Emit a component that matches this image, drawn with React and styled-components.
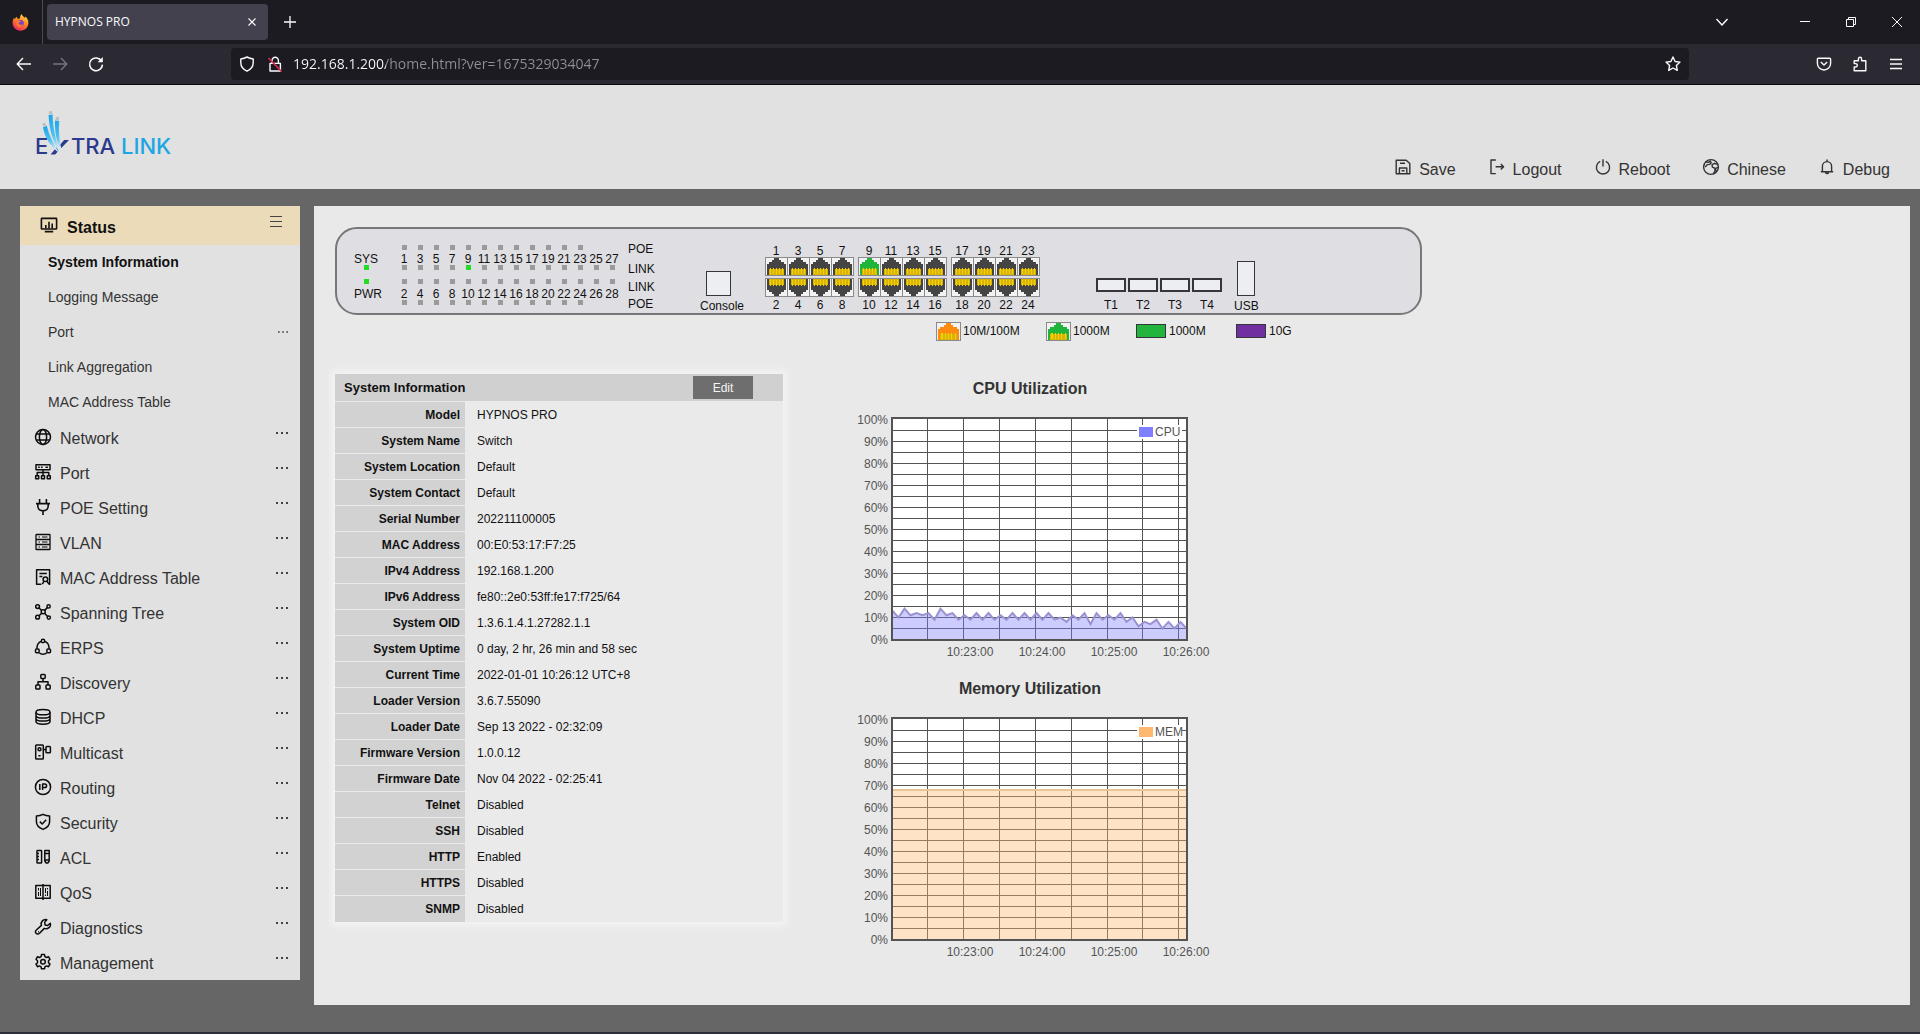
import React from "react";
import styled, { createGlobalStyle } from "styled-components";

const UI = `"Liberation Sans", Arial, sans-serif`;
const CHROME = `"Open Sans", "Noto Sans", sans-serif`;

const GlobalStyle = createGlobalStyle`
  *, *::before, *::after { box-sizing: border-box; }
  body { margin: 0; background: #666; font-family: ${UI}; color: #333; }
  button, input { font: inherit; color: inherit; margin: 0; padding: 0; border: 0; background: none; }
  button { cursor: pointer; }
  a { color: inherit; text-decoration: none; }
  svg { display: block; flex: none; overflow: visible; }
`;

const Window = styled.div`
  display: flex;
  flex-direction: column;
  min-height: 100vh;
  border-bottom: 2px solid #2b2d38;
`;

/* ---------- browser chrome ---------- */

const TabBar = styled.div`
  display: flex;
  align-items: center;
  height: 44px;
  background: #1c1b22;
  color: #fbfbfe;
`;

const BrandSlot = styled.div`
  display: flex;
  align-items: center;
  align-self: stretch;
  width: 43px;
  padding-left: 12px;
  border-right: 1px solid #4a4956;
`;

const Tab = styled.div`
  display: flex;
  align-items: center;
  justify-content: space-between;
  width: 221px;
  height: 36px;
  margin-left: 4px;
  padding: 0 12px 0 8px;
  border-radius: 4px;
  background: #42414d;
  font: 12px/16px ${CHROME};
`;

const IconButton = styled.button`
  display: flex;
  align-items: center;
  justify-content: center;
  width: ${(p) => p.$w || 36}px;
  height: 32px;
  color: ${(p) => (p.$dim ? "#76757f" : "#fbfbfe")};
`;

const TabClose = styled(IconButton)`
  width: 8px;
  height: 16px;
`;

const NewTab = styled(IconButton)`
  margin-left: 4px;
`;

const WindowControls = styled.div`
  display: flex;
  align-items: center;
  margin-left: auto;
`;

const Toolbar = styled.div`
  display: flex;
  align-items: center;
  height: 41px;
  background: #2b2a33;
  border-bottom: 1px solid #0c0c0d;
`;

const ToolGroup = styled.div`
  display: flex;
  align-items: center;
  justify-content: ${(p) => (p.$end ? "flex-end" : "flex-start")};
  width: 231px;
  padding: 0 6px;
`;

const UrlBar = styled.form`
  display: flex;
  flex: 1;
  align-items: center;
  gap: 12px;
  height: 32px;
  padding: 0 8px;
  border-radius: 4px;
  background: #1c1b22;
  color: #fbfbfe;
`;

const UrlInput = styled.input`
  flex: 1;
  height: 20px;
  margin-left: -2px;
  outline: none;
  font: 14px/20px ${CHROME};
  color: #fbfbfe;
  background: linear-gradient(to right, #fbfbfe 93px, #8f8f9b 93px);
  background-clip: text;
  -webkit-background-clip: text;
  -webkit-text-fill-color: transparent;
`;

/* ---------- page header ---------- */

const Header = styled.header`
  display: flex;
  justify-content: space-between;
  align-items: flex-end;
  height: 104px;
  padding: 0 30px 8px 35px;
  background: #e1e1e1;
`;

const Logo = styled.a`
  display: block;
  align-self: flex-start;
  padding-top: 22px;
`;

const TopNav = styled.nav`
  display: flex;
  gap: 33px;
`;

const TopLink = styled.a`
  display: flex;
  gap: 8px;
  font-size: 16px;
  line-height: 22px;
`;

/* ---------- layout ---------- */

const Body = styled.div`
  display: flex;
  flex: 1;
  align-items: stretch;
  gap: 14px;
  padding: 17px 10px 27px 20px;
  background: #666;
`;

const Sidebar = styled.nav`
  align-self: flex-start;
  width: 280px;
  background: #e1e1e1;
`;

const SectionHead = styled.div`
  display: flex;
  gap: 9px;
  height: 39px;
  padding: 10px 18px 0 20px;
  background: #ebdbb8;
  color: #111;
`;

const SectionTitle = styled.h2`
  margin: 0;
  font-size: 16px;
  line-height: 24px;
`;

const MenuButton = styled.button`
  display: flex;
  align-items: flex-start;
  width: 12px;
  height: 12px;
  margin-left: auto;
  color: #444;
`;

const SubItem = styled.a`
  display: flex;
  align-items: center;
  justify-content: space-between;
  height: 35px;
  padding: 0 12px 2px 28px;
  font-size: 14px;
  font-weight: ${(p) => (p.$current ? "bold" : "normal")};
  color: ${(p) => (p.$current ? "#111" : "#333")};
`;

const MenuItem = styled.a`
  display: flex;
  gap: 8px;
  height: 35px;
  padding: 8px 12px 0 14px;
  font-size: 16px;
  line-height: 22px;
`;

const ItemIcon = styled.span`
  display: flex;
  width: 18px;
  height: 18px;
  color: #0c0c0c;
`;

const DotsSlot = styled.span`
  margin-left: auto;
  padding-top: 4px;
`;

const Main = styled.main`
  flex: 1;
  padding: 21px;
  background: #e9e9e9;
`;

/* ---------- device front panel ---------- */

const Panel = styled.section`
  display: grid;
  grid-template-columns: 42px 232px 72px 65px 331px 138px auto;
  align-items: start;
  max-width: 1087px;
  height: 88px;
  padding: 14px 17px 0;
  border: 2px solid #77777a;
  border-radius: 22px;
  background: #dfdfe3;
  color: #111;
  font-size: 12px;
  line-height: 12px;
`;

const Lamps = styled.div`
  display: flex;
  flex-direction: column;
  padding-top: 10px;
`;

const Led = styled.i`
  display: block;
  width: 5px;
  height: 5px;
  margin: ${(p) => p.$m || "0"};
  background: ${(p) => (p.$on ? "#22dd22" : "#9a9a9a")};
  visibility: ${(p) => (p.$hidden ? "hidden" : "visible")};
`;

const LedBank = styled.div`
  display: flex;
  padding-top: 2px;
`;

const LedColumn = styled.div`
  display: flex;
  flex-direction: column;
  align-items: center;
  width: 16px;
`;

const RowNames = styled.div`
  display: grid;
  grid-template-rows: 20px 18px 17px 12px;
`;

const ConsolePort = styled.div`
  display: flex;
  flex-direction: column;
  padding-top: 28px;
`;

const Socket = styled.div`
  width: ${(p) => p.$w}px;
  height: ${(p) => p.$h}px;
  margin: ${(p) => p.$m || "0"};
  border: ${(p) => p.$b || 1}px solid #35353c;
  background: ${(p) => p.$fill || "#eceef2"};
`;

const JackBank = styled.div`
  display: flex;
  gap: 5px;
  padding-top: 2px;
`;

const JackGroup = styled.div`
  display: flex;
`;

const JackColumn = styled.div`
  display: grid;
  grid-template-rows: 12px 21px 21px 12px;
  justify-items: center;
  width: 22px;
`;

const Slots = styled.div`
  display: flex;
  gap: 2px;
  padding-top: 35px;
`;

const SlotColumn = styled.div`
  display: flex;
  flex-direction: column;
  align-items: center;
  gap: 7px;
`;

const UsbPort = styled.div`
  display: flex;
  flex-direction: column;
  align-items: center;
  justify-self: start;
  padding-top: 18px;
`;

const Legend = styled.ul`
  display: grid;
  grid-template-columns: 110px 90px 100px auto;
  max-width: 1087px;
  margin: 6px 0 0;
  padding: 0 0 0 601px;
  list-style: none;
  color: #111;
  font-size: 12px;
`;

const LegendItem = styled.li`
  display: flex;
  align-items: center;
  gap: 3px;
  height: 20px;
`;

/* ---------- information table & charts ---------- */

const Columns = styled.div`
  display: flex;
  align-items: flex-start;
  gap: 57px;
  margin-top: 33px;
`;

const InfoCard = styled.section`
  width: 448px;
  box-shadow: 0 0 6px 4px #f3f3f3;
  color: #111;
`;

const CardHead = styled.div`
  display: flex;
  align-items: center;
  justify-content: space-between;
  height: 27px;
  padding: 0 30px 0 9px;
  background: #d0d0d0;
`;

const CardTitle = styled.h2`
  margin: 0;
  font-size: 13px;
`;

const EditButton = styled.button`
  width: 60px;
  height: 23px;
  background: #6e6e6e;
  color: #f4f4f4;
  font-size: 12px;
`;

const InfoTable = styled.table`
  width: 100%;
  border-collapse: collapse;
  background: #eaeaeb;
  font-size: 12px;

  th, td {
    height: 26px;
    padding: 0;
    border-top: 1px solid transparent;
  }
  th {
    width: 130px;
    padding-right: 5px;
    border-top-color: #eaeaea;
    background: #d2d2d2;
    text-align: right;
  }
  td {
    padding-left: 12px;
  }
`;

const Charts = styled.div`
  display: flex;
  flex-direction: column;
  gap: 20px;
  padding-top: 6px;
`;

const Figure = styled.figure`
  display: flex;
  flex-direction: column;
  gap: 12px;
  margin: 0;
`;

const Caption = styled.figcaption`
  font-size: 16px;
  font-weight: bold;
  line-height: 18px;
  text-align: center;
`;

const AxisText = styled.text`
  font: 12px ${UI};
  fill: #545454;
`;

/* ---------- icons ---------- */

const S = ({ size = 18, box, w = 1.5, children }) => (
  <svg
    width={size}
    height={size}
    viewBox={`0 0 ${box || size} ${box || size}`}
    fill="none"
    stroke="currentColor"
    strokeWidth={w}
    strokeLinejoin="round"
    aria-hidden="true"
  >
    {children}
  </svg>
);

const icons = {
  network: (
    <S w={1.5}>
      <circle cx="9" cy="9" r="7.5" />
      <ellipse cx="9" cy="9" rx="3.6" ry="7.5" />
      <path d="M2.4 6h13.2M2.4 12h13.2" />
    </S>
  ),
  port: (
    <S w={1.5}>
      <rect x="2" y="1.8" width="14" height="5" />
      <path d="M4.200 4.3h1.6M7 4.3h1.6M11.5 4.3h2.4M9 6.8V13M3.2 12.6V9.6h11.6v3.2" />
      <rect x="1.7" y="12.8" width="3" height="3" />
      <rect x="7.5" y="12.8" width="3" height="3" />
      <rect x="13.3" y="12.8" width="3" height="3" />
    </S>
  ),
  poe: (
    <S w={1.6}>
      <path d="M5.6 1v4.5M12.4 1v4.5M2 5.6h14M3.8 5.6V8c0 3 2.4 4.8 5.2 4.8S14.2 11 14.2 8V5.6M9 12.8V17" />
    </S>
  ),
  vlan: (
    <S w={1.3}>
      <rect x="2" y="1.5" width="14" height="15" rx="0.6" />
      <path d="M2 6.5h14M2 11.5h14" />
      <path d="M4.500 4h1.500M8 4h5.500M4.500 9h1.500M8 9h5.500M4.500 14h1.500M8 14h5.500" strokeWidth="1" />
    </S>
  ),
  mac: (
    <S w={1.5}>
      <path d="M7.4 16.2H2.6V1.8h13v14.4h-.6M5.4 5.4h7.4M5.4 8.4h3" />
      <circle cx="11.4" cy="11.2" r="2.3" />
      <path d="M12.8 13.2l2.4 3M9.8 13.4l-1.4 2.8" />
    </S>
  ),
  spanning: (
    <S w={1.5}>
      <circle cx="3.6" cy="3.6" r="1.9" />
      <circle cx="14.6" cy="3.4" r="1.6" />
      <circle cx="3.6" cy="14.2" r="1.9" />
      <circle cx="14.8" cy="14.6" r="1.6" />
      <circle cx="9.2" cy="8.8" r="2" />
      <path d="M5 5l2.600 2.400M13.400 4.600l-2.800 2.800M5 12.800l2.600-2.400M13.600 13.400l-2.800-3" />
    </S>
  ),
  erps: (
    <S w={1.5}>
      <circle cx="9" cy="3" r="1.7" />
      <path d="M7.2 3.4C4.6 4.4 3 6.8 3 9.8v1M10.800 3.400c2.600 1 4.200 3.400 4.200 6.400v1M5.200 14.800c2 2 5.600 2 7.600 0" />
      <rect x="1.5" y="11" width="3.6" height="3.8" rx="1" />
      <rect x="12.9" y="11" width="3.6" height="3.8" rx="1" />
    </S>
  ),
  discovery: (
    <S w={1.5}>
      <rect x="6.800" y="1.400" width="4.400" height="4" rx="0.8" />
      <path d="M9 5.400v3.400M4 12V8.800h10V12" />
      <rect x="1.800" y="12" width="4.200" height="4" rx="0.8" />
      <rect x="12" y="12" width="4.200" height="4" rx="0.8" />
    </S>
  ),
  dhcp: (
    <S w={1.5}>
      <ellipse cx="9" cy="4.200" rx="7" ry="2.600" />
      <path d="M2 4.200v9.400c0 1.500 3.100 2.600 7 2.600s7-1.100 7-2.600V4.200M2 7.400C2 8.900 5.100 10 9 10s7-1.100 7-2.600M2 10.500c0 1.500 3.100 2.600 7 2.600s7-1.100 7-2.600" />
    </S>
  ),
  multicast: (
    <S w={1.5}>
      <rect x="1.700" y="2" width="7.600" height="14" rx="0.8" />
      <circle cx="5.500" cy="6.200" r="1.500" />
      <path d="M4.400 12.800h2.200M9.300 6.400H12" />
      <rect x="12" y="3.400" width="4.400" height="6.400" rx="0.8" />
    </S>
  ),
  routing: (
    <S w={1.5}>
      <circle cx="9" cy="9" r="7.600" />
      <path d="M5.800 6v6M8.600 12V6h2.200a1.800 1.800 0 0 1 0 3.600H8.600" />
    </S>
  ),
  security: (
    <S w={1.5}>
      <path d="M9 1.400c2 1.200 4.200 1.600 6.600 1.600v5.600c0 3.800-2.800 6.400-6.600 7.800-3.800-1.400-6.600-4-6.600-7.800V3C4.800 3 7 2.600 9 1.400z" />
      <path d="M5.800 8.600l2.400 2.400 4-4.200" />
    </S>
  ),
  acl: (
    <S w={1.5}>
      <rect x="3" y="2.400" width="4.600" height="12.600" rx="0.6" />
      <path d="M3 5.400h2M3 8.400h2M3 11.400h2M10.800 5.400h4.400M10.800 12h4.400" />
      <path d="M10.800 2.400h4.400V13l-1.400 2h-1.600l-1.400-2z" />
    </S>
  ),
  qos: (
    <S w={1.5}>
      <rect x="1.800" y="2.600" width="14.400" height="12.600" />
      <path d="M9 1v16" />
      <path d="M4.500 5v2.500M4.500 9v4M6.500 5v8M11.500 5v5M11.500 11.500V13M13.500 5v1.500M13.500 8v5" strokeWidth="1" />
    </S>
  ),
  diagnostics: (
    <S w={1.5}>
      <path d="M12.800 1.700a4.400 4.400 0 0 0-5.400 5.700L2.100 12.300a2 2 0 0 0 0 3 2.200 2.200 0 0 0 3.200.2l5-5.100a4.400 4.400 0 0 0 6-5.200l-2.700 2.300-2.500-.6-.5-2.500z" />
      <path d="M4 13.800h.8" />
    </S>
  ),
  management: (
    <S w={1.5}>
      <path d="M7.500 1.600h3l.4 2 1.600.9 2-.8 1.500 2.600-1.500 1.400v2l1.500 1.400-1.500 2.600-2-.8-1.600.9-.4 2h-3l-.4-2-1.600-.9-2 .8L2 11.100l1.500-1.400v-2L2 6.300l1.500-2.600 2 .8 1.600-.9z" />
      <circle cx="9" cy="8.700" r="2.300" />
    </S>
  ),
  status: (
    <S size={18} w={1.6}>
      <rect x="1.400" y="2.400" width="15.200" height="10.600" rx="0.6" />
      <path d="M5.800 12.600V9M9 12.600V5.800M12.200 12.600V7.600M4.800 15.600h8.400" />
    </S>
  ),
  save: (
    <S size={16} w={1.4}>
      <path d="M1.200 1.200h10l3.600 3.400v10.200H1.200z" />
      <path d="M4.400 14.600V9h7.400v5.600M5 4.200h5M6.600 11.800h3" />
    </S>
  ),
  logout: (
    <S size={16} w={1.4}>
      <path d="M6.800 1H2v13.600h4.800M6.600 7.800h8M11.800 5l2.800 2.800-2.800 2.800" />
    </S>
  ),
  power: (
    <S size={16} w={1.4}>
      <path d="M5.200 2.400a6.600 6.600 0 1 0 5.600 0M8 .2v7.200" />
    </S>
  ),
  globe: (
    <S size={16} w={1.4}>
      <circle cx="8" cy="8" r="7.400" />
      <path d="M3 3l2.600.4L7.200 2l1 1.800-1.600 1.600-2.400.2-2 2.400M14.600 5.200l-3.400-.8-2.200 1.400.4 2.400 2.400 1 .2 2.600-1.600 3M13.400 12.400l-1.200-2.800 2.800-1.200" />
    </S>
  ),
  bell: (
    <S size={16} w={1.4}>
      <path d="M3.400 12.600V7.200a4.600 4.600 0 0 1 9.200 0v5.400M1.800 12.700h12.400M8 2.600V.6M6.600 13v.8c0 1 2.800 1 2.800 0V13" />
    </S>
  ),
};

const Dots = ({ w = 12 }) => (
  <svg width={w} height="2" viewBox="0 0 12 2" fill="#444" aria-hidden="true">
    <path d="M0 0h2v2H0zM5 0h2v2H5zM10 0h2v2h-2z" />
  </svg>
);

const Firefox = () => (
  <svg width="17" height="17" viewBox="0 0 17 17" aria-hidden="true">
    <defs>
      <linearGradient id="flame" x1="0.8" y1="0" x2="0.3" y2="1">
        <stop offset="0" stopColor="#ffe14a" />
        <stop offset="0.45" stopColor="#ff8a1f" />
        <stop offset="1" stopColor="#f0246a" />
      </linearGradient>
    </defs>
    <path
      d="M9.600 0c.4 1.800 2 2.600 3.200 3.800.5-.3.600-.8.500-1.300C15.400 4 16.400 6.400 16.400 9c0 4.400-3.500 7.700-7.900 7.700S.6 13.400.6 9c0-2 .5-3.800 1.400-5.200l.6 1.400C3.200 4 4 3.200 5 2.800l.2 1.800 2.600.2C8 2.600 8.600 1 9.600 0z"
      fill="url(#flame)"
    />
    <circle cx="8.400" cy="9.400" r="3.400" fill="#7a3fd0" />
    <path d="M4.600 6.600c2-.6 3.600.2 5 .6-1.800.4-2 1.200-3 1.600 0 2 2.600 2.800 4.800 1.200-.6 2.600-2.400 3.400-4 3.200-2.400-.4-4-3-2.800-6.600z" fill="#ff7a25" />
  </svg>
);

const LogoArt = () => (
  <svg width="142" height="58" viewBox="0 0 142 58" role="img" aria-label="Extralink">
    <defs>
      <linearGradient id="fiber" x1="0" y1="0" x2="0.3" y2="1">
        <stop offset="0" stopColor="#18a4ea" />
        <stop offset="0.6" stopColor="#4fc1f0" />
        <stop offset="1" stopColor="#cfe8f4" />
      </linearGradient>
    </defs>
    <path d="M34 33h-4.800L24.400 38.600l1.400 3zM21.400 40.400L15.600 47.500h4.600l3.600-4z" fill="#2b3a8c" />
    <g fill="url(#fiber)">
      <path d="M13.600 8l4-.4c.2 14 3.400 26 8 39.400-5.800-9-11.600-22-12-39z" />
      <path d="M20 13.600l4.200.4c-.8 11 .2 20 2.800 31C22 37 19.600 26 20 13.600z" />
      <path d="M8 20.200l3.800-1.400c2.200 9.800 6.600 18 12.600 27.200C16 40 9.800 31 8 20.200z" />
    </g>
    <g fill="#b9c0c6">
      <path d="M14.200 4h2.600l.6 3-3.600.2zM21.400 10h2.600v3.400l-3.800-.2zM7.400 16.400l2.600-1 1.400 2.800-3.400 1.400z" />
    </g>
    <g fontFamily="Inter, sans-serif" fontSize="22" fontWeight="500">
      <text x="0" y="47" fill="#2b3a8c">E</text>
      <text x="36" y="47" fill="#2b3a8c">TRA</text>
      <text x="86" y="47" fill="#1ea6e4">LINK</text>
    </g>
  </svg>
);

const Jack = ({ fill = "#444", flip, w = 22 }) => (
  <svg
    width={w}
    height="19"
    viewBox="0 0 22 19"
    preserveAspectRatio="none"
    shapeRendering="crispEdges"
    aria-hidden="true"
  >
    <g transform={flip ? "matrix(1 0 0 -1 0 19)" : undefined}>
      <rect x="0.500" y="0.500" width="22" height="18" fill="#f2f2f2" stroke="#8a8a8a" />
      <path d="M2 18V7h2V5h3V3h2V1h5v2h2v2h3v2h2v11z" fill={fill} />
      <rect x="4" y="12" width="15" height="6" fill="#d8b40a" />
      <path d="M5.500 11v6M8.500 11v6M11.500 11v6M14.500 11v6M17.500 11v6" stroke="#f4d000" />
    </g>
  </svg>
);

/* ---------- data ---------- */

const subItems = [
  { label: "System Information", current: true },
  { label: "Logging Message" },
  { label: "Port", more: true },
  { label: "Link Aggregation" },
  { label: "MAC Address Table" },
];

const menu = [
  ["Network", "network"],
  ["Port", "port"],
  ["POE Setting", "poe"],
  ["VLAN", "vlan"],
  ["MAC Address Table", "mac"],
  ["Spanning Tree", "spanning"],
  ["ERPS", "erps"],
  ["Discovery", "discovery"],
  ["DHCP", "dhcp"],
  ["Multicast", "multicast"],
  ["Routing", "routing"],
  ["Security", "security"],
  ["ACL", "acl"],
  ["QoS", "qos"],
  ["Diagnostics", "diagnostics"],
  ["Management", "management"],
];

const topLinks = [
  ["Save", "save"],
  ["Logout", "logout"],
  ["Reboot", "power"],
  ["Chinese", "globe"],
  ["Debug", "bell"],
];

const info = [
  ["Model", "HYPNOS PRO"],
  ["System Name", "Switch"],
  ["System Location", "Default"],
  ["System Contact", "Default"],
  ["Serial Number", "202211100005"],
  ["MAC Address", "00:E0:53:17:F7:25"],
  ["IPv4 Address", "192.168.1.200"],
  ["IPv6 Address", "fe80::2e0:53ff:fe17:f725/64"],
  ["System OID", "1.3.6.1.4.1.27282.1.1"],
  ["System Uptime", "0 day, 2 hr, 26 min and 58 sec"],
  ["Current Time", "2022-01-01 10:26:12 UTC+8"],
  ["Loader Version", "3.6.7.55090"],
  ["Loader Date", "Sep 13 2022 - 02:32:09"],
  ["Firmware Version", "1.0.0.12"],
  ["Firmware Date", "Nov 04 2022 - 02:25:41"],
  ["Telnet", "Disabled"],
  ["SSH", "Disabled"],
  ["HTTP", "Enabled"],
  ["HTTPS", "Disabled"],
  ["SNMP", "Disabled"],
];

const ledPairs = Array.from({ length: 14 }, (_, i) => [2 * i + 1, 2 * i + 2]);
const jackGroups = [0, 1, 2].map((g) => [0, 1, 2, 3].map((i) => 8 * g + 2 * i + 1));

const cpu = [
  13, 10, 14, 11, 12, 11, 12, 9, 14, 11, 12, 9, 11, 9, 12, 9, 12, 9, 11, 9, 12, 9, 12, 9, 12, 9, 12,
  9, 10, 8, 11, 9, 12, 7, 12, 9, 11, 9, 12, 8, 10, 6, 8, 7, 9, 5, 8, 5, 8, 5,
];
const mem = cpu.map(() => 68);

/* ---------- chart ---------- */

const LEFT = 52.5;
const BASE = 229.5;

function Chart({ title, series, values, color, area, line }) {
  const pts = values.map((v, i) => `${LEFT + i * 6},${BASE - v * 2.2}`).join(" ");
  return (
    <Figure>
      <Caption>{title}</Caption>
      <svg width="380" height="250" viewBox="0 0 380 250">
        <rect x="52" y="8" width="295" height="222" fill="#fff" />
        <g stroke="#545454" shapeRendering="crispEdges">
          {Array.from({ length: 19 }, (_, i) => (
            <path key={i} d={`M52 ${20.5 + i * 11}H347`} />
          ))}
          {[87.5, 123.5, 159.5, 195.5, 231.5, 267.5, 302.5, 338.5].map((x) => (
            <path key={x} d={`M${x} 8V230`} />
          ))}
        </g>
        <polygon points={`${LEFT},${BASE} ${pts} 346.5,${BASE}`} fill={area} />
        <polyline points={pts} fill="none" stroke={line} strokeWidth="2" />
        <rect x="52" y="8" width="295" height="222" fill="none" stroke="#545454" strokeWidth="2" />
        <rect x="297" y="15" width="45" height="14" fill="#fff" />
        <rect x="299" y="17" width="14" height="10" fill={color} />
        <AxisText x="315" y="26">{series}</AxisText>
        {Array.from({ length: 11 }, (_, i) => (
          <AxisText key={i} x="48" y={234 - i * 22} textAnchor="end">
            {`${i * 10}%`}
          </AxisText>
        ))}
        {["10:23:00", "10:24:00", "10:25:00", "10:26:00"].map((t, i) => (
          <AxisText key={t} x={130 + i * 72} y="246" textAnchor="middle">
            {t}
          </AxisText>
        ))}
      </svg>
    </Figure>
  );
}

/* ---------- sections ---------- */

function BrowserChrome() {
  return (
    <div>
      <TabBar>
        <BrandSlot>
          <Firefox />
        </BrandSlot>
        <Tab>
          <span>HYPNOS PRO</span>
          <TabClose aria-label="Close tab" $w={8}>
            <S size={8} w={1.1}>
              <path d="M0.500 0.500l7 7M7.500 0.500l-7 7" />
            </S>
          </TabClose>
        </Tab>
        <NewTab aria-label="New tab">
          <S size={12} w={1.3}>
            <path d="M6 0v12M0 6h12" />
          </S>
        </NewTab>
        <WindowControls>
          <IconButton aria-label="List all tabs" $w={120}>
            <S size={12} w={1.4}>
              <path d="M0.500 3l5.500 6 5.500-6" />
            </S>
          </IconButton>
          <IconButton aria-label="Minimize" $w={46}>
            <S size={10} w={1}>
              <path d="M0 4.500h10" />
            </S>
          </IconButton>
          <IconButton aria-label="Restore" $w={46}>
            <S size={10} w={1}>
              <path d="M0.500 2.500h7v7h-7zM2.500 2.500v-2h7v7h-2" />
            </S>
          </IconButton>
          <IconButton aria-label="Close" $w={46}>
            <S size={10} w={1}>
              <path d="M0 0l10 10M10 0L0 10" />
            </S>
          </IconButton>
        </WindowControls>
      </TabBar>
      <Toolbar>
        <ToolGroup>
          <IconButton aria-label="Back">
            <S size={16} w={1.4}>
              <path d="M15 8H1.500M7 2L1.200 8 7 14" />
            </S>
          </IconButton>
          <IconButton aria-label="Forward" $dim>
            <S size={16} w={1.4}>
              <path d="M1 8h13.500M9 2l5.800 6L9 14" />
            </S>
          </IconButton>
          <IconButton aria-label="Reload">
            <S size={16} w={1.5}>
              <path d="M13.600 5.200A6.400 6.400 0 1 0 14.400 8.600" />
              <path d="M14.800 1v5.200H9.600z" fill="currentColor" stroke="none" />
            </S>
          </IconButton>
        </ToolGroup>
        <UrlBar onSubmit={(e) => e.preventDefault()}>
          <S size={16} w={1.4}>
            <path d="M8 1c2 1 4 1.600 6.200 2v3.800c0 3.800-2.600 6.800-6.200 8.400-3.600-1.600-6.200-4.600-6.200-8.400V3C4 2.600 6 2 8 1z" />
          </S>
          <S size={16} w={1.4}>
            <path d="M3 7.400h10.400V15H3zM5 7V4.400a3.200 3.200 0 0 1 6.400 0V7" />
            <path d="M1.500 2l13 13.500" stroke="#e22850" strokeWidth="1.600" />
          </S>
          <UrlInput
            aria-label="Address"
            defaultValue="192.168.1.200/home.html?ver=1675329034047"
            spellCheck={false}
          />
          <S size={16} w={1.4}>
            <path d="M8 1l2.100 4.500 4.900.6-3.600 3.400.9 4.900L8 12l-4.300 2.400.9-4.900L1 6.100l4.900-.6z" />
          </S>
        </UrlBar>
        <ToolGroup $end>
          <IconButton aria-label="Save to Pocket">
            <S size={16} w={1.4}>
              <path d="M2.400 2.200h11.200c.6 0 1 .4 1 1v4.200a6.600 6.600 0 0 1-13.200 0V3.200c0-.6.400-1 1-1zM4.800 6l3.200 3 3.200-3" />
            </S>
          </IconButton>
          <IconButton aria-label="Extensions">
            <S size={16} w={1.4}>
              <path d="M2.200 14.800V11h1.400a1.600 1.600 0 0 0 0-3.400H2.200V4.800h4.200V2.900a1.500 1.500 0 0 1 3.200 0v1.900h4.200v10z" />
            </S>
          </IconButton>
          <IconButton aria-label="Menu">
            <S size={14} w={1.4}>
              <path d="M1 2.500h12M1 7h12M1 11.500h12" />
            </S>
          </IconButton>
        </ToolGroup>
      </Toolbar>
    </div>
  );
}

function SideMenu() {
  return (
    <Sidebar aria-label="Main menu">
      <SectionHead>
        {icons.status}
        <SectionTitle>Status</SectionTitle>
        <MenuButton aria-label="Collapse menu">
          <svg width="12" height="11" viewBox="0 0 12 11" stroke="currentColor" shapeRendering="crispEdges">
            <path d="M0 0.500h12M0 5.500h12M0 10.500h12" />
          </svg>
        </MenuButton>
      </SectionHead>
      {subItems.map((s) => (
        <SubItem key={s.label} href="#" $current={s.current}>
          {s.label}
          {s.more && <Dots w={10} />}
        </SubItem>
      ))}
      {menu.map(([label, icon]) => (
        <MenuItem key={label} href="#">
          <ItemIcon>{icons[icon]}</ItemIcon>
          {label}
          <DotsSlot>
            <Dots />
          </DotsSlot>
        </MenuItem>
      ))}
    </Sidebar>
  );
}

function DevicePanel() {
  return (
    <>
      <Panel aria-label="Device front panel">
        <Lamps>
          SYS
          <Led $on $m="0 0 9px 10px" />
          <Led $on $m="0 0 4px 10px" />
          PWR
        </Lamps>
        <LedBank>
          {ledPairs.map(([odd, even]) => (
            <LedColumn key={odd}>
              <Led $hidden={odd > 24} $m="0 0 3px" />
              {odd}
              <Led $on={odd === 9} $m="0 0 9px" />
              <Led $m="0 0 4px" />
              {even}
              <Led $hidden={even > 24} />
            </LedColumn>
          ))}
        </LedBank>
        <RowNames>
          <span>POE</span>
          <span>LINK</span>
          <span>LINK</span>
          <span>POE</span>
        </RowNames>
        <ConsolePort>
          <Socket $w={25} $h={25} $m="0 0 4px 6px" />
          Console
        </ConsolePort>
        <JackBank>
          {jackGroups.map((group) => (
            <JackGroup key={group[0]}>
              {group.map((n) => (
                <JackColumn key={n}>
                  <span>{n}</span>
                  <Jack fill={n === 9 ? "#1fb53a" : undefined} />
                  <Jack flip />
                  <span>{n + 1}</span>
                </JackColumn>
              ))}
            </JackGroup>
          ))}
        </JackBank>
        <Slots>
          {["T1", "T2", "T3", "T4"].map((t) => (
            <SlotColumn key={t}>
              <Socket $w={30} $h={14} $b={2} />
              {t}
            </SlotColumn>
          ))}
        </Slots>
        <UsbPort>
          <Socket $w={18} $h={35} $m="0 0 4px" />
          USB
        </UsbPort>
      </Panel>
      <Legend>
        <LegendItem>
          <Jack fill="#ff8a10" w={24} />
          10M/100M
        </LegendItem>
        <LegendItem>
          <Jack fill="#1fb53a" w={24} />
          1000M
        </LegendItem>
        <LegendItem>
          <Socket $w={30} $h={14} $b={1} $fill="#22b43c" />
          1000M
        </LegendItem>
        <LegendItem>
          <Socket $w={30} $h={14} $b={1} $fill="#70309f" />
          10G
        </LegendItem>
      </Legend>
    </>
  );
}

export default function App() {
  return (
    <Window>
      <GlobalStyle />
      <BrowserChrome />
      <Header>
        <Logo href="#">
          <LogoArt />
        </Logo>
        <TopNav>
          {topLinks.map(([label, icon]) => (
            <TopLink key={label} href="#">
              {icons[icon]}
              {label}
            </TopLink>
          ))}
        </TopNav>
      </Header>
      <Body>
        <SideMenu />
        <Main>
          <DevicePanel />
          <Columns>
            <InfoCard>
              <CardHead>
                <CardTitle>System Information</CardTitle>
                <EditButton>Edit</EditButton>
              </CardHead>
              <InfoTable>
                <tbody>
                  {info.map(([k, v]) => (
                    <tr key={k}>
                      <th scope="row">{k}</th>
                      <td>{v}</td>
                    </tr>
                  ))}
                </tbody>
              </InfoTable>
            </InfoCard>
            <Charts>
              <Chart
                title="CPU Utilization"
                series="CPU"
                values={cpu}
                color="#8080ff"
                area="rgba(128,128,255,0.4)"
                line="#9a92d0"
              />
              <Chart
                title="Memory Utilization"
                series="MEM"
                values={mem}
                color="#ffb870"
                area="rgba(255,184,112,0.4)"
                line="#e6c493"
              />
            </Charts>
          </Columns>
        </Main>
      </Body>
    </Window>
  );
}
